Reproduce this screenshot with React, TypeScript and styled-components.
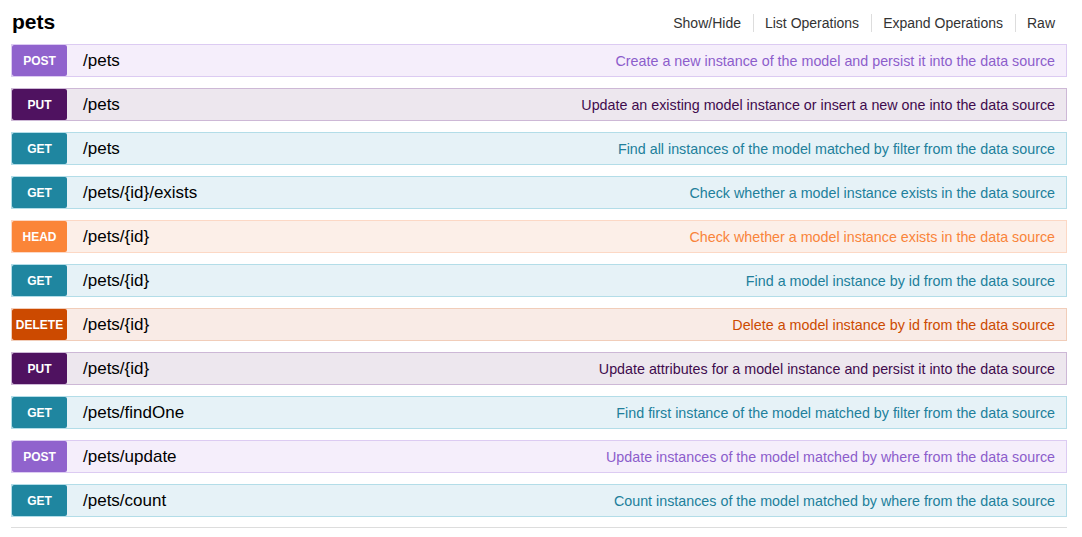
import React from "react";
import styled, { createGlobalStyle } from "styled-components";

type Method = "POST" | "PUT" | "GET" | "HEAD" | "DELETE";

type TTheme = { badge: string; bg: string; border: string; text: string };

const methodColors: Record<Method, TTheme> = {
  POST: { badge: "#9063cd", bg: "#f5eefb", border: "#dccbf2", text: "#8c5dcb" },
  PUT: { badge: "#4f1260", bg: "#ede7ee", border: "#cdb8d6", text: "#3f0b4d" },
  GET: { badge: "#1f86a0", bg: "#e6f2f7", border: "#b3dde8", text: "#217f9b" },
  HEAD: { badge: "#fb8538", bg: "#fcefe8", border: "#fcd8c5", text: "#f9843a" },
  DELETE: { badge: "#cc4a00", bg: "#f9ebe6", border: "#f1cdb9", text: "#cc4a00" },
};

type TOperation = { method: Method; path: string; summary: string };

const operations: TOperation[] = [
  { method: "POST", path: "/pets", summary: "Create a new instance of the model and persist it into the data source" },
  { method: "PUT", path: "/pets", summary: "Update an existing model instance or insert a new one into the data source" },
  { method: "GET", path: "/pets", summary: "Find all instances of the model matched by filter from the data source" },
  { method: "GET", path: "/pets/{id}/exists", summary: "Check whether a model instance exists in the data source" },
  { method: "HEAD", path: "/pets/{id}", summary: "Check whether a model instance exists in the data source" },
  { method: "GET", path: "/pets/{id}", summary: "Find a model instance by id from the data source" },
  { method: "DELETE", path: "/pets/{id}", summary: "Delete a model instance by id from the data source" },
  { method: "PUT", path: "/pets/{id}", summary: "Update attributes for a model instance and persist it into the data source" },
  { method: "GET", path: "/pets/findOne", summary: "Find first instance of the model matched by filter from the data source" },
  { method: "POST", path: "/pets/update", summary: "Update instances of the model matched by where from the data source" },
  { method: "GET", path: "/pets/count", summary: "Count instances of the model matched by where from the data source" },
];

const headerLinks = ["Show/Hide", "List Operations", "Expand Operations", "Raw"];

const GlobalStyle = createGlobalStyle`
  body {
    margin: 0;
    background: #fff;
    font-family: "Liberation Sans", Arial, Helvetica, sans-serif;
  }
`;

const Resource = styled.div`
  width: 1056px;
  margin-left: 11px;
  padding-bottom: 8px;
`;

const Heading = styled.div`
  display: flex;
  justify-content: space-between;
  align-items: center;
  height: 44px;
  padding-bottom: 1px;
  box-sizing: border-box;
`;

const Title = styled.h2`
  margin: 0 0 0 1px;
  font-size: 21px;
  font-weight: bold;
  color: #000;
`;

const Links = styled.ul`
  display: flex;
  list-style: none;
  margin: 0;
  padding: 2px 0 0;
`;

const LinkItem = styled.li`
  padding: 0 12px 0 11px;
  font-size: 14px;
  line-height: 18px;
  color: #333;
  border-left: 1px solid #ddd;
  &:first-child {
    border-left: none;
  }
`;

const OperationList = styled.ul`
  list-style: none;
  margin: 0;
  padding: 0 0 10px;
  border-bottom: 1px solid #ddd;
`;

const Row = styled.li<{ $method: Method }>`
  display: flex;
  align-items: center;
  height: 31px;
  margin-bottom: 11px;
  background: ${(p) => methodColors[p.$method].bg};
  border: 1px solid ${(p) => methodColors[p.$method].border};
  &:last-child {
    margin-bottom: 0;
  }
`;

const Badge = styled.span<{ $method: Method }>`
  flex: none;
  display: flex;
  align-items: center;
  justify-content: center;
  width: 55px;
  height: 31px;
  border-radius: 2px;
  background: ${(p) => methodColors[p.$method].badge};
  color: #fff;
  font-size: 12px;
  font-weight: bold;
`;

const Path = styled.span`
  margin-left: 16px;
  font-size: 17px;
  color: #000;
`;

const Summary = styled.span<{ $method: Method }>`
  margin-left: auto;
  padding-right: 11px;
  font-size: 14.3px;
  color: ${(p) => methodColors[p.$method].text};
`;

export default function App() {
  return (
    <>
      <GlobalStyle />
      <Resource>
        <Heading>
          <Title>pets</Title>
          <Links>
            {headerLinks.map((l) => (
              <LinkItem key={l}>{l}</LinkItem>
            ))}
          </Links>
        </Heading>
        <OperationList>
          {operations.map((op, i) => (
            <Row key={i} $method={op.method}>
              <Badge $method={op.method}>{op.method}</Badge>
              <Path>{op.path}</Path>
              <Summary $method={op.method}>{op.summary}</Summary>
            </Row>
          ))}
        </OperationList>
      </Resource>
    </>
  );
}
